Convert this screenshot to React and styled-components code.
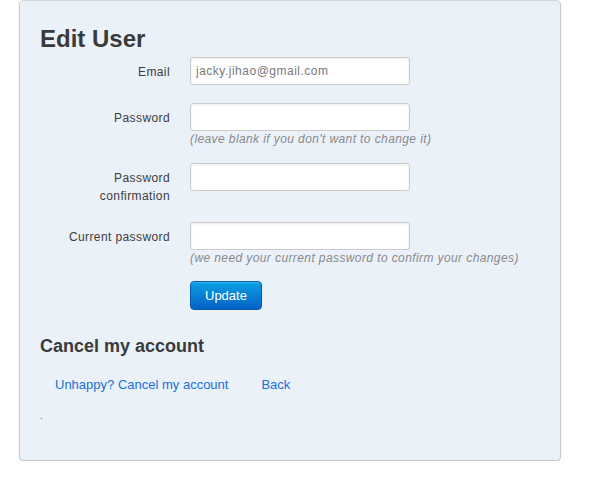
import React from 'react';
import styled, { createGlobalStyle } from 'styled-components';

const GlobalStyle = createGlobalStyle`
  html, body { margin: 0; padding: 0; background: #fff; }
  body { font-family: "Liberation Sans", Arial, sans-serif; font-size: 13px; color: #404040; }
`;

const Card = styled.div`
  box-sizing: border-box;
  margin-left: 19px;
  width: 542px;
  height: 461px;
  padding: 24px 20px 0 20px;
  background: #eaf1f9;
  border: 1px solid #c9c9c9;
  border-top-color: #d6d6d6;
  border-radius: 5px;
  box-shadow: 0 1px 2px rgba(0, 0, 0, 0.12);
`;

const Title = styled.h1`
  margin: 0 0 4px;
  font-size: 24px;
  line-height: 28px;
  font-weight: bold;
  color: #3a3a3a;
`;

const Form = styled.form`
  margin: 0;
`;

const Group = styled.div`
  display: flex;
  margin-bottom: ${p => p.$gap ?? 18}px;
`;

const Label = styled.label`
  width: 130px;
  flex: none;
  padding-top: 6px;
  text-align: right;
  line-height: 18px;
  font-size: 12px;
  letter-spacing: 0.4px;
  color: #3c3c3c;
`;

const Controls = styled.div`
  margin-left: 20px;
  display: flex;
  flex-direction: column;
  align-items: flex-start;
`;

const Input = styled.input`
  box-sizing: border-box;
  width: 220px;
  height: 28px;
  margin: 0;
  padding: 4px 5px;
  font-family: inherit;
  font-size: 12px;
  letter-spacing: 0.5px;
  color: #7a7a7a;
  background: #fff;
  border: 1px solid #cbcbcb;
  border-radius: 3px;
  box-shadow: inset 0 1px 2px rgba(0, 0, 0, 0.08);
  outline: none;
`;

const Help = styled.span`
  margin-top: 1px;
  font-size: 12px;
  line-height: 15px;
  letter-spacing: 0.4px;
  font-style: italic;
  color: #8a8a8a;
`;

const Button = styled.button`
  box-sizing: border-box;
  height: 29px;
  padding: 0 14px;
  font-family: inherit;
  font-size: 13px;
  color: #fff;
  background: linear-gradient(#0aa0e4, #0562c6);
  border: 1px solid #0558b4;
  border-radius: 4px;
  box-shadow: inset 0 1px 0 rgba(255, 255, 255, 0.2);
  cursor: pointer;
`;

const SubTitle = styled.h3`
  margin: 25px 0 0;
  font-size: 18px;
  line-height: 22px;
  font-weight: bold;
  color: #3a3a3a;
`;

const Links = styled.div`
  display: flex;
  gap: 33px;
  margin: 19px 0 0 15px;
  line-height: 18px;
`;

const Link = styled.a`
  color: #1a6fd6;
  text-decoration: none;
  font-size: 13px;
`;

const Dot = styled.p`
  margin: 13px 0 0;
  font-size: 10px;
  line-height: 18px;
  color: #666;
`;

export default function App() {
  return (
    <>
      <GlobalStyle />
      <Card>
        <Title>Edit User</Title>
        <Form onSubmit={e => e.preventDefault()}>
          <Group>
            <Label>Email</Label>
            <Controls>
              <Input type="email" defaultValue="jacky.jihao@gmail.com" />
            </Controls>
          </Group>
          <Group $gap={16}>
            <Label>Password</Label>
            <Controls>
              <Input type="password" />
              <Help>(leave blank if you don't want to change it)</Help>
            </Controls>
          </Group>
          <Group $gap={17}>
            <Label>Password<br />confirmation</Label>
            <Controls>
              <Input type="password" />
            </Controls>
          </Group>
          <Group $gap={15}>
            <Label>Current password</Label>
            <Controls>
              <Input type="password" />
              <Help>(we need your current password to confirm your changes)</Help>
            </Controls>
          </Group>
          <Group $gap={0}>
            <Label />
            <Controls>
              <Button type="submit">Update</Button>
            </Controls>
          </Group>
        </Form>
        <SubTitle>Cancel my account</SubTitle>
        <Links>
          <Link href="#">Unhappy? Cancel my account</Link>
          <Link href="#">Back</Link>
        </Links>
        <Dot>.</Dot>
      </Card>
    </>
  );
}
